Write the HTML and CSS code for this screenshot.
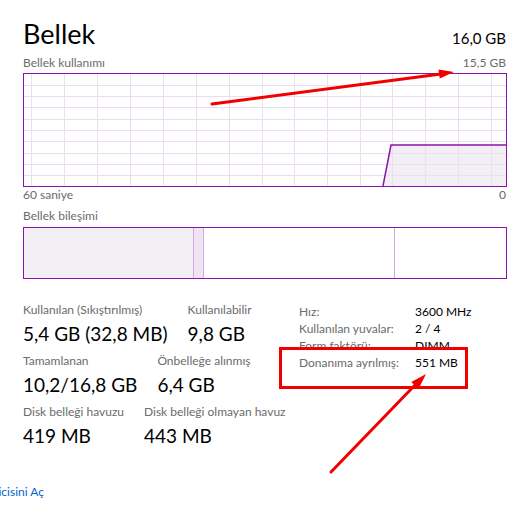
FILE: index.html
```html
<!DOCTYPE html>
<html lang="tr">
<head>
<meta charset="utf-8">
<title>Bellek</title>
<link rel="stylesheet" href="styles.css">
</head>
<body>
<div class="page">
  <header class="head">
    <h1 class="title">Bellek</h1>
    <span class="total">16,0 GB</span>
  </header>
  <div class="cap-row top-cap">
    <span>Bellek kullanımı</span>
    <span>15,5 GB</span>
  </div>
  <div class="graph">
    <svg class="graph-svg" width="482" height="112" viewBox="0 0 482 112">
      <polygon class="area" points="359,112 367,71 482,71 482,112"/>
      <g class="grid">
        <line x1="7.5" y1="0" x2="7.5" y2="112"/>
        <line x1="40.5" y1="0" x2="40.5" y2="112"/>
        <line x1="73.5" y1="0" x2="73.5" y2="112"/>
        <line x1="106.5" y1="0" x2="106.5" y2="112"/>
        <line x1="139.5" y1="0" x2="139.5" y2="112"/>
        <line x1="172.5" y1="0" x2="172.5" y2="112"/>
        <line x1="205.5" y1="0" x2="205.5" y2="112"/>
        <line x1="238.5" y1="0" x2="238.5" y2="112"/>
        <line x1="270.5" y1="0" x2="270.5" y2="112"/>
        <line x1="303.5" y1="0" x2="303.5" y2="112"/>
        <line x1="336.5" y1="0" x2="336.5" y2="112"/>
        <line x1="368.5" y1="0" x2="368.5" y2="112"/>
        <line x1="401.5" y1="0" x2="401.5" y2="112"/>
        <line x1="434.5" y1="0" x2="434.5" y2="112"/>
        <line x1="467.5" y1="0" x2="467.5" y2="112"/>
        <line x1="0" y1="11.5" x2="482" y2="11.5"/>
        <line x1="0" y1="22.5" x2="482" y2="22.5"/>
        <line x1="0" y1="33.5" x2="482" y2="33.5"/>
        <line x1="0" y1="45.5" x2="482" y2="45.5"/>
        <line x1="0" y1="56.5" x2="482" y2="56.5"/>
        <line x1="0" y1="67.5" x2="482" y2="67.5"/>
        <line x1="0" y1="79.5" x2="482" y2="79.5"/>
        <line x1="0" y1="90.5" x2="482" y2="90.5"/>
        <line x1="0" y1="101.5" x2="482" y2="101.5"/>
      </g>
      <polyline class="usage" points="359,112 367,71 482,71"/>
    </svg>
  </div>
  <div class="cap-row">
    <span>60 saniye</span>
    <span>0</span>
  </div>
  <div class="cap comp-cap">Bellek bileşimi</div>
  <div class="compo">
    <div class="seg inuse"></div>
    <div class="seg modified"></div>
    <div class="seg standby"></div>
    <div class="seg free"></div>
  </div>
  <section class="stats">
    <div class="stats-left">
      <div class="stat-row">
        <div class="stat"><div class="lbl">Kullanılan (Sıkıştırılmış)</div><div class="val">5,4 GB (32,8 MB)</div></div>
        <div class="stat"><div class="lbl">Kullanılabilir</div><div class="val">9,8 GB</div></div>
      </div>
      <div class="stat-row">
        <div class="stat"><div class="lbl">Tamamlanan</div><div class="val">10,2/16,8 GB</div></div>
        <div class="stat"><div class="lbl">Önbelleğe alınmış</div><div class="val">6,4 GB</div></div>
      </div>
      <div class="stat-row">
        <div class="stat"><div class="lbl">Disk belleği havuzu</div><div class="val">419 MB</div></div>
        <div class="stat"><div class="lbl">Disk belleği olmayan havuz</div><div class="val">443 MB</div></div>
      </div>
    </div>
    <dl class="stats-right">
      <dt>Hız:</dt><dd>3600 MHz</dd>
      <dt>Kullanılan yuvalar:</dt><dd>2 / 4</dd>
      <dt>Form faktörü:</dt><dd>DIMM</dd>
      <dt>Donanıma ayrılmış:</dt><dd>551 MB</dd>
    </dl>
  </section>
  <div class="link-row"><a class="link" href="#">Kaynak İzleyicisini Aç</a></div>

  <svg class="annot" width="516" height="507" viewBox="0 0 516 507">
    <rect x="280.5" y="348.5" width="186" height="39" fill="none" stroke="#f20000" stroke-width="3"/>
    <line x1="212" y1="104" x2="441" y2="74" stroke="#f20000" stroke-width="3" stroke-linecap="round"/>
    <polygon points="454,72 439.7,78.5 438.5,69.5" fill="#f20000"/>
    <line x1="331" y1="472" x2="416" y2="384" stroke="#f20000" stroke-width="3" stroke-linecap="round"/>
    <polygon points="426,374 418.5,389 411.3,382" fill="#f20000"/>
  </svg>
</div>
</body>
</html>
```

FILE: styles.css
```css
html, body {
  margin: 0;
  padding: 0;
  background: #ffffff;
}
body {
  font-family: "Lato", "Noto Sans", sans-serif;
  color: #000;
  overflow: hidden;
  width: 516px;
  height: 507px;
}
.page {
  position: relative;
  width: 516px;
  height: 507px;
  padding: 0 10px 0 23px;
  box-sizing: border-box;
  overflow: hidden;
}
.head {
  display: flex;
  justify-content: space-between;
  align-items: baseline;
  margin-top: 16px;
  height: 36px;
}
.title {
  margin: 0;
  font-size: 27px;
  font-weight: 400;
  line-height: 36px;
}
.total {
  font-size: 15px;
  line-height: 36px;
}
.cap-row {
  display: flex;
  justify-content: space-between;
  font-size: 12px;
  line-height: 16px;
  color: #6b6b6b;
}
.top-cap {
  margin-top: 3px;
}
.cap {
  font-size: 12px;
  line-height: 16px;
  color: #6b6b6b;
}
.graph {
  margin-top: 2px;
  width: 482px;
  height: 112px;
  border: 1px solid #8b12ae;
}
.graph-svg {
  display: block;
}
.grid line {
  stroke: #ecdef1;
  stroke-width: 1;
}
.area {
  fill: #f2eff4;
}
.usage {
  fill: none;
  stroke: #8b12ae;
  stroke-width: 1.5;
}
.comp-cap {
  margin-top: 5px;
}
.compo {
  margin-top: 3px;
  display: flex;
  width: 482px;
  height: 50px;
  border: 1px solid #8b12ae;
}
.seg {
  height: 100%;
}
.inuse {
  width: 169px;
  background: #f2eff4;
  border-right: 1px solid #d2aadf;
}
.modified {
  width: 9px;
  background: #efe4f3;
  border-right: 1px solid #d2aadf;
}
.standby {
  width: 190px;
  background: #fff;
  border-right: 1px solid #d2aadf;
}
.free {
  flex: 1;
  background: #fff;
}
.stats {
  display: flex;
  margin-top: 23px;
}
.stats-left {
  width: 276px;
  display: flex;
  flex-direction: column;
  gap: 5px;
}
.stat-row {
  display: flex;
  gap: 20px;
}
.lbl {
  font-size: 12px;
  line-height: 16px;
  color: #6b6b6b;
  white-space: nowrap;
}
.val {
  margin-top: 2px;
  font-size: 19px;
  line-height: 28px;
  white-space: nowrap;
}
.stats-right {
  margin: 1px 0 0 0;
  display: grid;
  grid-template-columns: 116px auto;
  grid-auto-rows: 17px;
  align-content: start;
  font-size: 12px;
  line-height: 17px;
}
.stats-right dt {
  color: #6b6b6b;
}
.stats-right dd {
  margin: 0;
  color: #000;
}
.link-row {
  margin-top: 34px;
  margin-left: -23px;
  width: 44px;
  display: flex;
  justify-content: flex-end;
}
.link {
  flex-shrink: 0;
  white-space: nowrap;
  font-size: 12px;
  line-height: 16px;
  color: #0066cc;
  text-decoration: none;
}
.annot {
  position: absolute;
  left: 0;
  top: 0;
  pointer-events: none;
}
```
